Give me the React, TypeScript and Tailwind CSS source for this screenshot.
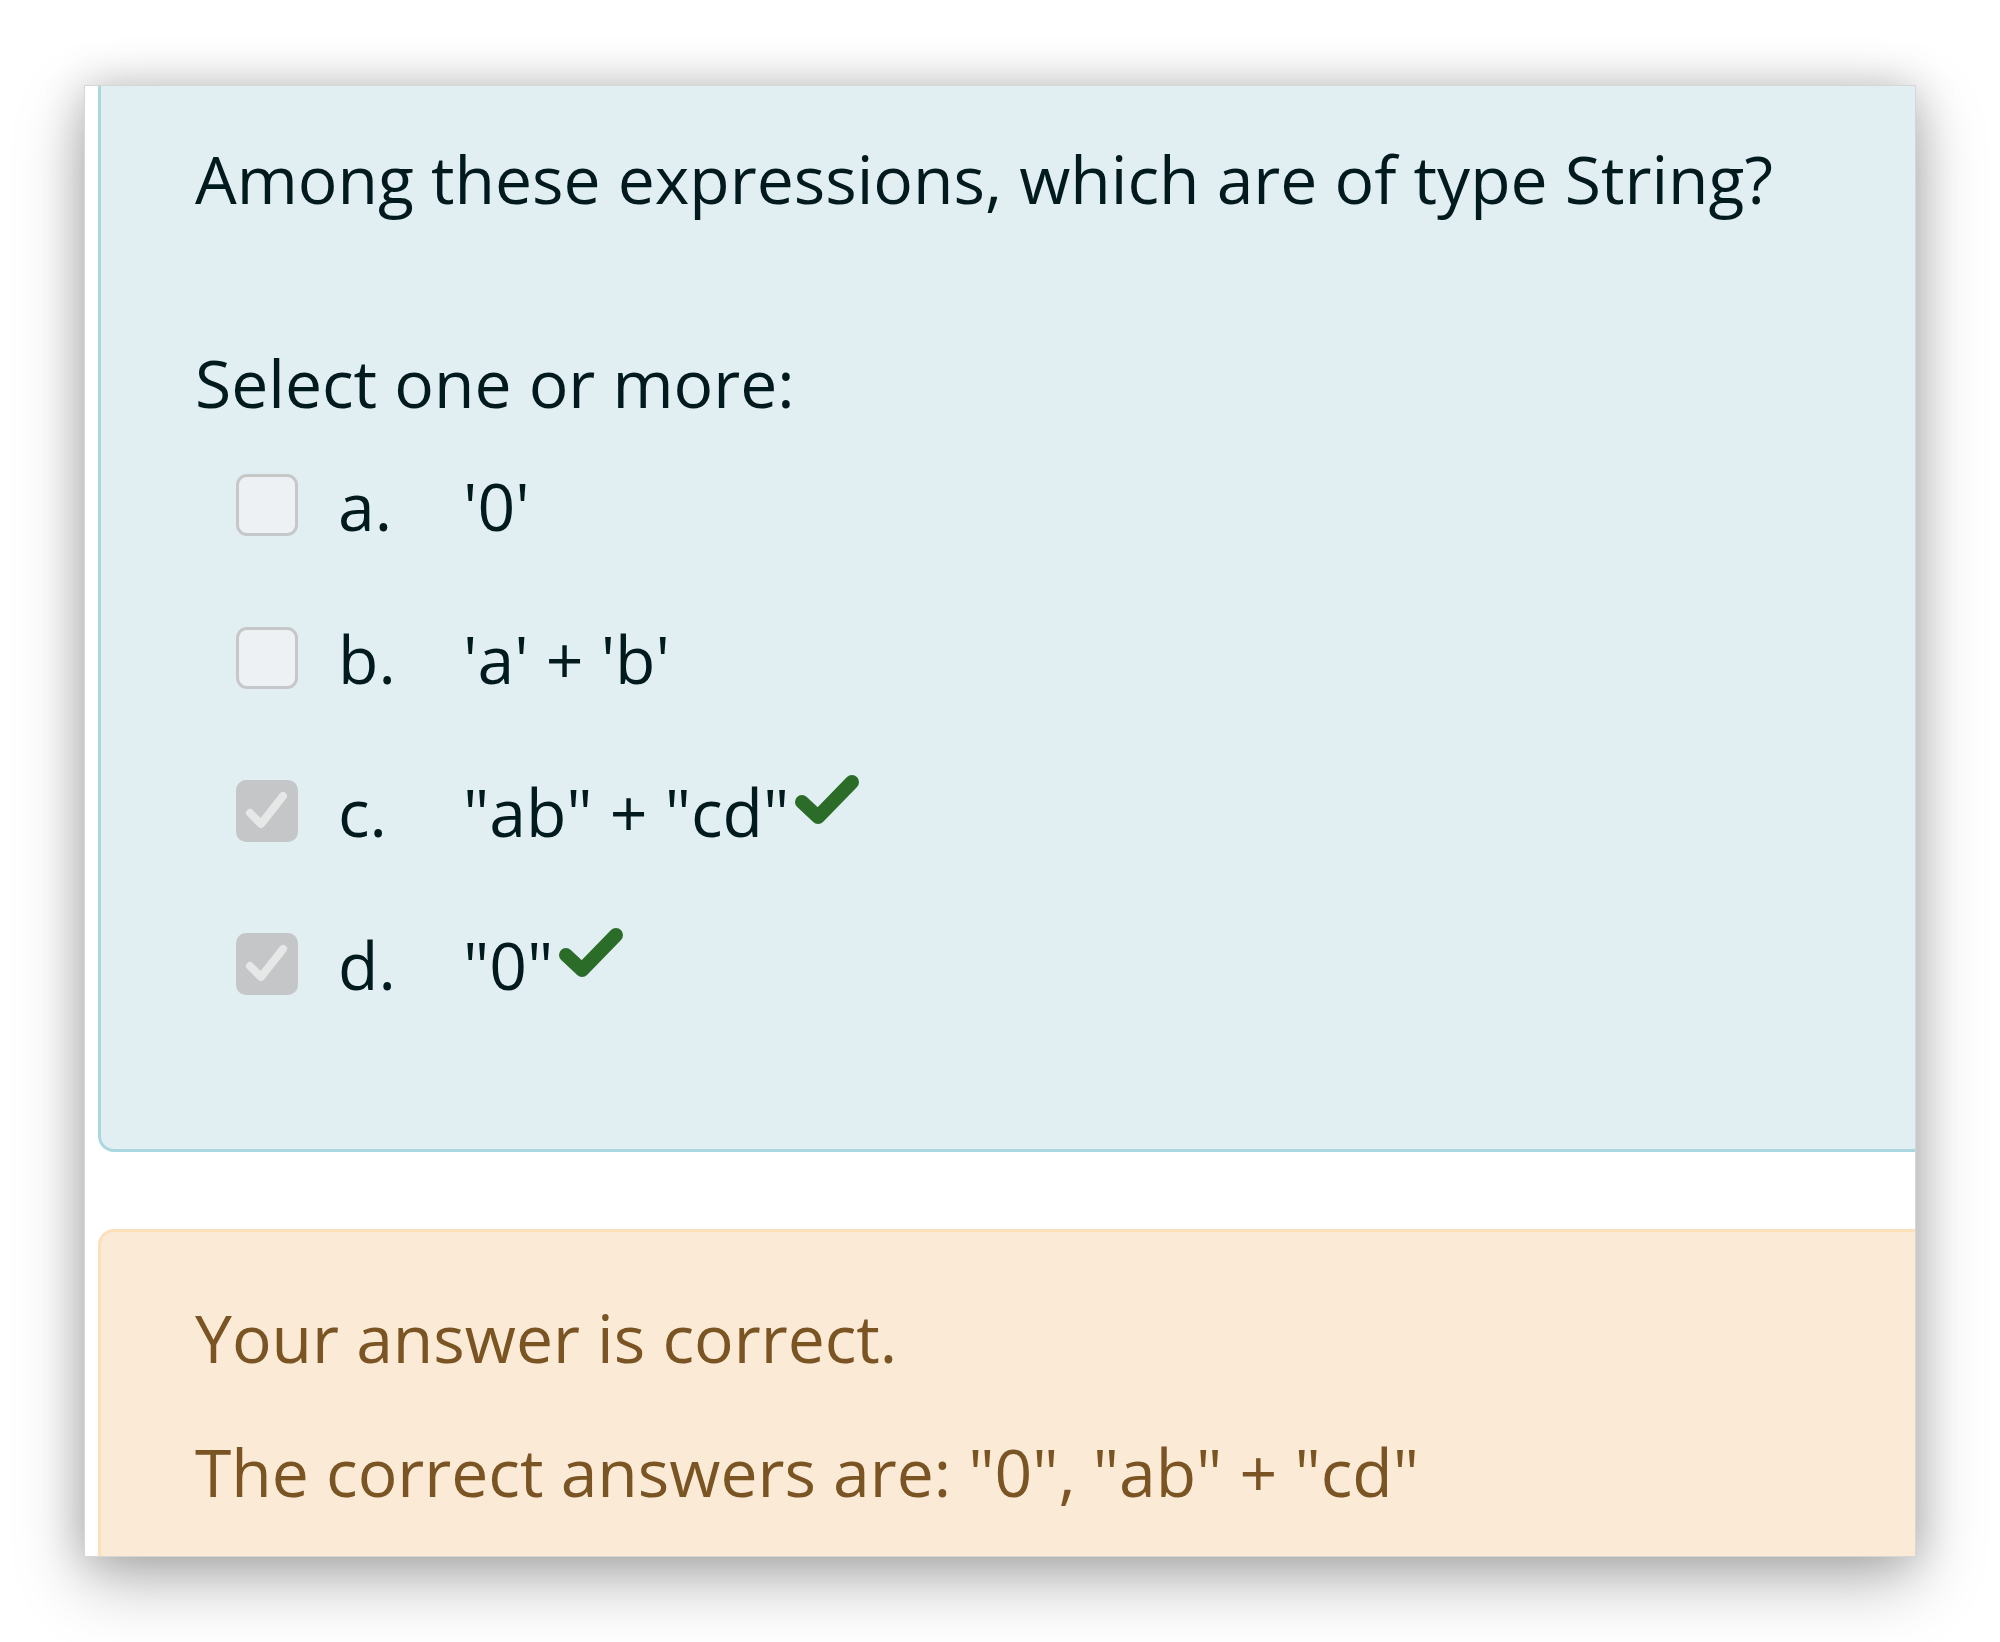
import React from 'react';

const OPTIONS = [
  { letter: 'a.', text: "'0'", checked: false },
  { letter: 'b.', text: "'a' + 'b'", checked: false },
  { letter: 'c.', text: '"ab" + "cd"', checked: true },
  { letter: 'd.', text: '"0"', checked: true },
];

function GreenCheck() {
  return (
    <svg viewBox="0 0 68 54" className="inline-block w-[68px] h-[54px] align-[10px] ml-[4px]">
      <path d="M9 29 L25 44 L59 9" fill="none" stroke="#2b6c29" strokeWidth="14" strokeLinecap="round" strokeLinejoin="round" />
    </svg>
  );
}

function Checkbox({ checked }: { checked: boolean }) {
  if (checked) {
    return (
      <div className="w-[62px] h-[62px] rounded-[10px] bg-[#c4c6c7] flex items-center justify-center shrink-0">
        <svg viewBox="0 0 62 62" className="w-[62px] h-[62px]">
          <path d="M14 33 L25 44 L47 16" fill="none" stroke="#e6e8e8" strokeWidth="8" strokeLinecap="round" strokeLinejoin="round" />
        </svg>
      </div>
    );
  }
  return <div className="w-[62px] h-[62px] rounded-[11px] bg-[#eef1f3] border-[3px] border-[#c5c7c8] shrink-0" />;
}

export default function App() {
  return (
    <div className="w-[2000px] h-[1642px] bg-white pt-[85px] pl-[84px]" style={{ fontFamily: '"Open Sans", "Noto Sans", sans-serif' }}>
      <div className="w-[1832px] h-[1472px] bg-white overflow-hidden border border-[#d6d6d6] shadow-[0_24px_64px_rgba(0,0,0,0.28),0_0_40px_rgba(0,0,0,0.18)] pl-[13px]">
        {/* Question */}
        <div className="mr-[-30px] bg-[#e1eff3] border-[3px] border-t-0 border-[#abd6de] rounded-b-[16px] pl-[94px] pt-[48px] pb-[141px] text-[#001a1e] text-[66px] leading-[88px]">
          <p>Among these expressions, which are of type String?</p>
          <p className="mt-[116px]">Select one or more:</p>
          <div className="mt-[35px] flex flex-col gap-[65px] pl-[41px]">
            {OPTIONS.map((o) => (
              <div key={o.letter} className="flex items-center">
                <Checkbox checked={o.checked} />
                <span className="ml-[40px] w-[125px]">{o.letter}</span>
                <span>
                  {o.text}
                  {o.checked && <GreenCheck />}
                </span>
              </div>
            ))}
          </div>
        </div>

        {/* Outcome */}
        <div className="mt-[77px] mr-[-30px] h-[400px] bg-[#fbead6] border-[3px] border-[#fbe0bb] rounded-t-[16px] pl-[94px] pt-[61px] text-[#7b5424] text-[66px] leading-[88px]">
          <p>Your answer is correct.</p>
          <p className="mt-[46px]">The correct answers are: "0", "ab" + "cd"</p>
        </div>
      </div>
    </div>
  );
}
